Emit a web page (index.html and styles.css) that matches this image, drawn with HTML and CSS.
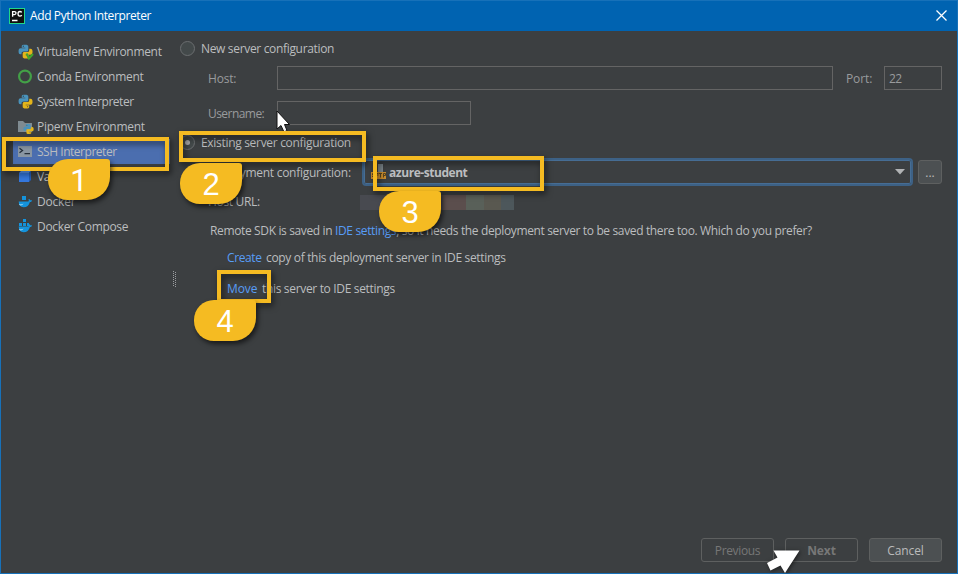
FILE: index.html
```html
<!DOCTYPE html>
<html lang="en">
<head>
<meta charset="utf-8">
<title>Add Python Interpreter</title>
<link rel="stylesheet" href="styles.css">
</head>
<body>
<svg class="defs" width="0" height="0" aria-hidden="true">
  <symbol id="python" viewBox="0 0 16 16">
    <path fill="#4a93bb" d="M4 4V2.500C4 1 5 .7 7.500 .7S11 1.200 11 2.800V6c0 1.300-.8 2-2 2H6C4.500 8 3.700 9 3.700 10.300V11H2.500C1 11 .6 9.700 .6 7.700S1.200 4.600 2.800 4.600H7.800V4Z"/>
    <path fill="#e3b51b" d="M12 12v1.500c0 1.500-1 1.900-3.500 1.900S5 14.800 5 13.200V10.300c0-1.200.7-1.800 1.900-1.800h3C11.400 8.500 12 7.600 12 6.300V5h1.300c1.600 0 2.200 1.200 2.200 3.200s-.7 3.200-2.200 3.200H8.200V12Z"/>
    <circle cx="5.700" cy="2.400" r=".7" fill="#2d4b5a"/><circle cx="10.200" cy="13.500" r=".7" fill="#75601d"/>
  </symbol>
  <symbol id="whale" viewBox="0 0 16 16">
    <path fill="#1493dc" d="M.7 8H11c.7-.6.700-1.800.1-2.700 1-.1 1.700.6 2 1.400.8-.2 1.500 0 1.900.4-.5.900-1.300 1.300-2.300 1.300C11.700 12 9.500 14 6 14S1 12 .7 8Z"/>
    <path fill="#88cdf2" d="M1 10.500c2 .7 4 .2 5-.5l-1 1.500c-1 .8-2.800.8-3.500.3Z"/>
  </symbol>
</svg>
<div class="window">
  <header class="titlebar">
    <svg class="app" width="16" height="16" viewBox="0 0 16 16"><rect x=".5" y=".5" width="15" height="15" fill="#101010" stroke="#21d789"/><path fill="none" stroke="#fff" stroke-width="1.300" d="M3.600 8.800V3.600H5.400Q7 3.600 7 5.100T5.400 6.700H3.600M12.800 4.400Q12 3.500 10.900 3.500Q9 3.500 9 5.800T10.900 8.100Q12 8.100 12.800 7.300M3 12.500H8.500"/></svg>
    <h1 class="title">Add Python Interpreter</h1>
    <svg class="close" width="11" height="11" viewBox="0 0 11 11"><path d="M.5.5l10 10M10.500.5l-10 10" stroke="#fff" stroke-width="1.250"/></svg>
  </header>
  <div class="content">
    <nav class="sidebar">
      <a class="item"><svg width="16" height="16"><use href="#python" width="15" height="15"/><path d="M8.500 9.500l2.500 5L15 10" fill="none" stroke="#44a52d" stroke-width="2"/></svg><span class="n1">Virtualenv Environment</span></a>
      <a class="item"><svg width="16" height="16"><circle cx="7" cy="7.500" r="5.900" fill="none" stroke="#43a047" stroke-width="2.200"/></svg><span class="n2">Conda Environment</span></a>
      <a class="item"><svg width="16" height="16"><use href="#python" width="15" height="15"/></svg><span class="n3">System Interpreter</span></a>
      <a class="item"><svg width="16" height="16"><path fill="#7f8b91" d="M0 2h5l2 2h7v9H0Z"/><use href="#python" x="5" y="4.500" width="11" height="11"/></svg><span class="n4">Pipenv Environment</span></a>
      <a class="item selected"><svg width="16" height="16"><path fill="#8996a3" d="M0 2h14v11H0Z"/><path fill="none" stroke="#252f3b" stroke-width="1.300" d="M1.500 4.200L4.500 6.500L1.500 8.800M6.500 9.700H12"/></svg><span class="n5">SSH Interpreter</span></a>
      <a class="item"><svg width="16" height="16"><path fill="#3578df" d="M1 4h10v9H1Z"/><path fill="#5593ed" d="M1 4l2-2h10l-2 2Z"/><path fill="#235fba" d="M11 4l2-2v9l-2 2Z"/></svg><span class="n6">Vagrant</span></a>
      <a class="item"><svg width="16" height="16"><path fill="#1493dc" d="M4 2h4v4H4Z"/><use href="#whale" width="15" height="15"/></svg><span class="n7">Docker</span></a>
      <a class="item"><svg width="16" height="16"><path fill="#1493dc" d="M5 0h3v3H5ZM1 4h3v3H1ZM5 4h3v3H5ZM9 4h2v3H9Z"/><use href="#whale" width="15" height="15"/></svg><span class="n8">Docker Compose</span></a>
    </nav>
    <div class="splitter"><svg width="5" height="16"><path d="M1.500 0v15M3.500 1v15" stroke="#9b9da0" stroke-dasharray="1 1"/></svg></div>
    <main class="form">
      <div class="row choice first"><i class="radio"></i><span class="t1">New server configuration</span></div>
      <div class="row host"><label class="label dim t2">Host:</label><span class="input grow"></span><label class="label dim port">Port:</label><span class="input small">22</span></div>
      <div class="row user"><label class="label dim t3">Username:</label><span class="input name"></span></div>
      <div class="row choice existing"><i class="radio on"></i><span class="t4">Existing server configuration</span></div>
      <div class="row deploy"><label class="label t5">Deployment configuration:</label>
        <div class="combo"><svg width="16" height="16"><path fill="#7d878c" d="M7 0h5v8H7Z"/><path fill="#c98b2c" d="M0 8h15v7H0Z"/><path fill="none" stroke="#59441f" d="M4 9.500H1.500V11H4v1.500H1M7.500 9.500H5.500v4M5.500 11h2M8 9.500h3M9.500 9.500v4M12.500 13.500v-4h2v2h-2"/></svg><b class="t6">azure-student</b><svg class="arrow" width="10" height="6"><path fill="#b1b3b5" d="M0 0h10L5 5.500Z"/></svg></div>
        <button class="browse">...</button></div>
      <div class="row url"><label class="label t7">Host URL:</label><span class="mosaic"><i class="m1"></i><i class="m2"></i><i class="m3"></i><i class="m4"></i><i class="m5"></i><i class="m6"></i></span></div>
      <p class="row remote t8">Remote SDK is saved in&nbsp;<a>IDE settings</a>, so it needs the deployment server to be saved there too. Which do you prefer?</p>
      <p class="row create"><a class="verb t9">Create</a><span class="t10">copy of this deployment server in IDE settings</span></p>
      <p class="row move"><a class="verb t11">Move</a><span class="t12">this server to IDE settings</span></p>
    </main>
  </div>
  <footer class="actions"><button class="btn off prev">Previous</button><button class="btn off next">Next</button><button class="btn">Cancel</button></footer>
  <svg class="cursor" width="15" height="24" viewBox="0 0 15 24"><path d="M1 1V19L5 15.500L8 22L11 20.500L8.500 14.500H13.500Z" fill="#fff" stroke="#111"/></svg>
  <svg class="pointer" width="38" height="28" viewBox="0 0 38 28"><path d="M8.500 2.500H34.500L20 25L15.500 17.500L5.500 22.500L2 15L12.500 9.500Z" fill="#fff"/></svg>
  <div class="frame f1"></div><div class="frame f2"></div><div class="frame f3"></div><div class="frame f4"></div>
  <div class="badge b1">1</div><div class="badge b2">2</div><div class="badge b3">3</div><div class="badge b4">4</div>
</div>
</body>
</html>
```
FILE: styles.css
```css
* { box-sizing: border-box; }
body { margin: 0; overflow: hidden; font: 12px/16px "Open Sans", sans-serif; color: #bbbdbf; }
.defs { position: absolute; }
.window { position: relative; width: 958px; height: 574px; display: flex; flex-direction: column; background: #3c3f41; border: 1px solid #1771b9; }
.titlebar { height: 30px; flex: none; display: flex; align-items: center; padding: 0 10px 0 8px; background: #0063b1; color: #fff; }
.title { flex: 1; margin: 0 0 0 5px; font-size: 12px; font-weight: 400; letter-spacing: -.38px; white-space: nowrap; }
.close { margin-top: -1px; }
.content { flex: 1; display: flex; min-height: 0; }
.sidebar { width: 169px; padding: 8px 0 0 12px; }
.item { height: 25px; display: flex; align-items: center; padding-left: 5px; gap: 3px; white-space: nowrap; letter-spacing: -.32px; }
.n2, .n4 { letter-spacing: -.28px; }
.n3, .n5 { letter-spacing: -.47px; }
.n7 { letter-spacing: -.2px; }
.selected { background: #4b6eaf; }
.item svg { flex: none; }
.splitter { width: 9px; padding: 240px 0 0 2px; }
.form { flex: 1; padding: 5px 15px 0 0; min-width: 0; letter-spacing: -.33px; }
.row { display: flex; align-items: center; margin: 0; white-space: nowrap; }
.choice { height: 25px; }
.radio { width: 15px; height: 15px; flex: none; border: 1px solid #6b6e70; border-radius: 50%; margin: 0 6px 0 1px; display: flex; align-items: center; justify-content: center; background: #43494a; }
.on::after { content: ""; width: 5px; height: 5px; border-radius: 50%; background: #aaa; }
.label { flex: none; }
.dim { color: #999b9d; }
.host { height: 24px; margin-top: 5px; padding-left: 29px; }
.host .label, .user .label { padding-top: 2px; }
.host .label:first-child, .user .label { width: 69px; }
.t2 { letter-spacing: -.2px; }
.t3 { letter-spacing: -.55px; }
.input { height: 24px; border: 1px solid #646464; color: #999b9d; }
.grow { flex: 1; }
.label.port { width: 51px; padding-left: 13px; letter-spacing: -.1px; }
.small { width: 58px; padding: 4px; letter-spacing: -.5px; }
.user { height: 24px; margin-top: 11px; padding-left: 29px; }
.name { width: 194px; }
.existing { margin-top: 5px; }
.t4 { padding-top: 1px; letter-spacing: -.31px; }
.deploy { height: 28px; margin-top: 3px; padding-left: 29px; }
.t5 { width: 154px; padding-top: 2px; letter-spacing: -.27px; }
.combo { width: 551px; height: 28px; border: 2px solid #3d6185; border-radius: 4px; box-shadow: inset 0 0 0 1px #466d94; display: flex; align-items: center; padding: 0 6px 0 7px; }
.combo b { margin-left: 2px; padding-top: 2px; letter-spacing: -.45px; }
.arrow { margin-left: auto; }
.browse { width: 24px; height: 24px; margin-left: 5px; padding: 2px 0 0; border: 1px solid #5e6060; border-radius: 3px; background: #4c5052; color: #bbb; font: inherit; letter-spacing: 0; }
.url { height: 16px; margin-top: 7px; padding-left: 29px; }
.t7 { width: 152px; padding-top: 1px; }
.mosaic { display: flex; height: 15px; margin-top: 2px; }
.m1 { width: 55px; background: #484a50; } .m2 { width: 28px; background: #514c50; } .m3 { width: 23px; background: #5b4e4d; } .m4 { width: 18px; background: #596059; } .m5 { width: 17px; background: #595850; } .m6 { width: 13px; background: #4d575b; }
.remote a, .verb { color: #589df6; }
.remote { height: 20px; margin-top: 12px; padding-left: 31px; letter-spacing: -.36px; }
.create { height: 20px; margin-top: 7px; padding-left: 48px; }
.move { height: 20px; margin-top: 11px; padding-left: 48px; }
.create .verb { width: 39px; } .move .verb { width: 35px; }
.verb { letter-spacing: -.4px; }
.t11 { letter-spacing: -.1px; }
.actions { height: 35px; flex: none; display: flex; align-items: flex-start; justify-content: flex-end; gap: 11px; padding-right: 15px; }
.btn { width: 73px; height: 24px; padding: 2px 0 0; border: 1px solid #5e6060; border-radius: 3px; background: #4c5052; color: #bbb; font: inherit; letter-spacing: -.1px; }
.off { background: #3c3f41; color: #777; }
.prev { letter-spacing: -.35px; }
.next { font-weight: 700; }
.cursor { position: absolute; left: 275px; top: 109px; }
.pointer { position: absolute; left: 764px; top: 547px; filter: drop-shadow(1px 1px 2px #111b); }
.frame { position: absolute; border: 4px solid #f5bb22; filter: drop-shadow(2px 3px 3px #0009); }
.f1 { left: 1px; top: 136px; width: 167px; height: 34px; }
.f2 { left: 178px; top: 130px; width: 187px; height: 31px; }
.f3 { left: 372px; top: 155px; width: 171px; height: 35px; }
.f4 { left: 216px; top: 269px; width: 54px; height: 33px; }
.badge { position: absolute; width: 62px; height: 41px; border-radius: 20px 3px 23px 20px; background: #f5bb22; box-shadow: 2px 3px 5px #0009; color: #fff; font: 31px/43px "Liberation Sans", sans-serif; text-align: center; }
.b1 { left: 47px; top: 158px; font-family: Roboto, sans-serif; }
.b2 { left: 179px; top: 162px; }
.b3 { left: 378px; top: 190px; }
.b4 { left: 193px; top: 299px; }
```
